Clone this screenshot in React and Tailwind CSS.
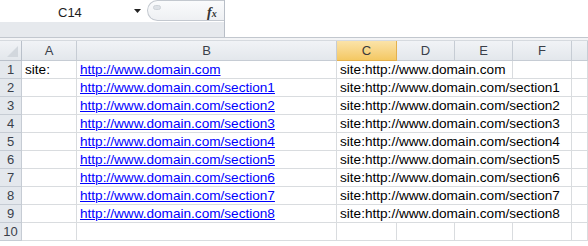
import React from "react";

const W = [22, 55, 260, 60, 58, 58, 59, 16];
const LETTERS = ["A", "B", "C", "D", "E", "F", ""];
const font = { fontFamily: '"Liberation Sans", Arial, sans-serif' };

function HeaderRow() {
  return (
    <div className="flex h-[20px]">
      <div
        className="relative shrink-0 border-r border-b border-[#b9c0ca] bg-gradient-to-b from-[#f1f3f6] to-[#e3e7ec]"
        style={{ width: W[0] }}
      >
        <div className="absolute right-[3px] bottom-[3px] h-0 w-0 border-l-[11px] border-t-[11px] border-l-transparent border-t-transparent border-b-[#d7dbe0] border-r-[#d7dbe0] border-b-[0px] border-r-[0px]" />
        <svg className="absolute right-[3px] bottom-[3px]" width="11" height="11" viewBox="0 0 11 11">
          <polygon points="11,0 11,11 0,11" fill="#d2d7dd" />
        </svg>
      </div>
      {LETTERS.map((l, i) => {
        const sel = l === "C";
        return (
          <div
            key={i}
            className={
              "shrink-0 flex items-center justify-center text-[13px] border-b border-r " +
              (sel
                ? "bg-gradient-to-b from-[#fbe3a8] to-[#f4c862] border-[#e3b04e] text-[#3a3a3a]"
                : "bg-gradient-to-b from-[#f1f3f6] to-[#e3e7ec] border-[#c6ccd4] text-[#3a3f4a]")
            }
            style={{ width: W[i + 1] }}
          >
            {l}
          </div>
        );
      })}
    </div>
  );
}

function Row({ n, a, b, c, hideRight = [] }) {
  const cells = [a, b, c, null, null, null, null];
  return (
    <div className="flex h-[18px]">
      <div
        className="shrink-0 flex items-end justify-center pb-[1px] text-[13px] leading-[15px] text-[#3a3f4a] bg-[#e4e8ed] border-r border-b border-[#c6ccd4]"
        style={{ width: W[0] }}
      >
        {n}
      </div>
      {cells.map((v, i) => (
        <div
          key={i}
          className={
            "shrink-0 border-b border-[#d9dcdf] pl-[3px] whitespace-nowrap overflow-visible text-[13.6px] leading-[17px] " +
            (hideRight.includes(i) ? "" : "border-r")
          }
          style={{ width: W[i + 1] }}
        >
          {i === 1 && v ? (
            <span className="text-[#0000ff] underline decoration-1 underline-offset-[1px]">{v}</span>
          ) : (
            v && <span className="text-black">{v}</span>
          )}
        </div>
      ))}
    </div>
  );
}

export default function App() {
  const rows = [];
  rows.push(
    <Row key={1} n="1" a="site:" b="http://www.domain.com" c="site:http://www.domain.com" hideRight={[2, 3]} />
  );
  for (let k = 1; k <= 8; k++) {
    rows.push(
      <Row
        key={k + 1}
        n={String(k + 1)}
        b={`http://www.domain.com/section${k}`}
        c={`site:http://www.domain.com/section${k}`}
        hideRight={[2, 3, 4]}
      />
    );
  }
  rows.push(<Row key={10} n="10" />);

  return (
    <div className="w-[588px] h-[246px] bg-white overflow-hidden text-black" style={font}>
      {/* formula bar */}
      <div className="flex h-[22px]">
        <div className="w-[225px] shrink-0 flex border-r border-[#b8bec7] bg-white">
          <div className="w-[145px] relative flex items-center">
            <span className="absolute left-[58px] top-[3px] text-[13px] text-[#1e1e1e]">C14</span>
            <svg className="absolute left-[134px] top-[9px]" width="7" height="4" viewBox="0 0 7 4">
              <polygon points="0,0 7,0 3.5,4" fill="#222" />
            </svg>
          </div>
          <div className="flex-1 relative">
            <div className="absolute left-[2px] top-[0px] bottom-[1px] right-0 rounded-l-[11px] border border-r-0 border-[#c3c8cf] bg-gradient-to-b from-[#fafbfc] to-[#eef0f3]" />
            <div className="absolute left-[8px] top-[5px] w-[8px] h-[5px] rounded-full bg-[#dde1e6] border border-[#cdd2d8]" />
            <span
              className="absolute left-[62px] top-[2px] text-[14px] italic font-bold text-[#333]"
              style={{ fontFamily: '"Liberation Serif", serif' }}
            >
              f<span className="text-[10px]">x</span>
            </span>
          </div>
        </div>
        <div className="flex-1 bg-white" />
      </div>
      <div className="flex h-[15px]">
        <div className="w-[225px] shrink-0 bg-[#e6e9ed] border-r border-[#b8bec7]" />
        <div className="flex-1 bg-white" />
      </div>
      <div className="h-[4px] border-t border-b border-t-[#c2c7ce] border-b-[#d6dadf] bg-[#f3f4f6]" />
      <HeaderRow />
      {rows}
    </div>
  );
}
